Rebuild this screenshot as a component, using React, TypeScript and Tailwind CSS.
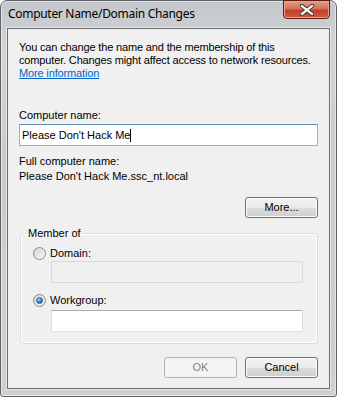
import React from "react";

const font = { fontFamily: '"Liberation Sans", Arial, sans-serif' };

function Radio({ checked }: { checked?: boolean }) {
  return (
    <svg width="13" height="13" viewBox="0 0 13 13" className="shrink-0">
      <defs>
        <linearGradient id="rbg" x1="0" y1="0" x2="1" y2="1">
          <stop offset="0" stopColor="#cfcfcf" />
          <stop offset="1" stopColor="#fafafa" />
        </linearGradient>
        <radialGradient id="rdot" cx="0.4" cy="0.35" r="0.7">
          <stop offset="0" stopColor="#a6d8ff" />
          <stop offset="0.5" stopColor="#3b8fd6" />
          <stop offset="1" stopColor="#1a4f86" />
        </radialGradient>
      </defs>
      <circle cx="6.5" cy="6.5" r="6" fill="url(#rbg)" stroke="#8a8a8a" strokeWidth="1" />
      <circle cx="6.5" cy="6.5" r="4.2" fill="none" stroke="#e8e8e8" strokeWidth="0.8" />
      {checked && <circle cx="6.5" cy="6.5" r="3" fill="url(#rdot)" stroke="#1d4f7c" strokeWidth="0.6" />}
    </svg>
  );
}

function Button({ children, disabled }: { children: React.ReactNode; disabled?: boolean }) {
  return (
    <div
      className={
        "w-[73px] h-[21px] rounded-[3px] border flex items-center justify-center text-[11px] leading-[13px] " +
        (disabled
          ? "border-[#adb2b5] bg-[#f4f4f4] text-[#838383]"
          : "border-[#707070] bg-[linear-gradient(#f2f2f2_0%,#ebebeb_50%,#dddddd_50%,#cfcfcf_100%)] text-black shadow-[inset_0_0_0_1px_#fcfcfc]")
      }
      style={font}
    >
      {children}
    </div>
  );
}

export default function App() {
  return (
    <div
      className="w-[337px] h-[397px] flex flex-col border border-[#5f6468] rounded-t-[7px] rounded-b-[3px] px-[6px] pb-[7px] bg-[linear-gradient(180deg,#c3c7cb_0%,#d2d4d6_12%,#c9cbcd_40%,#cfd0d1_100%)] shadow-[inset_0_0_0_1px_#e4e6e8]"
    >
      <div className="h-[27px] flex items-start justify-between">
        <div
          className="pt-[5px] pl-[1px] text-[12px] leading-[16px] tracking-[-0.3px] text-black"
          style={{ fontFamily: '"Noto Sans", "Open Sans", sans-serif' }}
        >
          Computer Name/Domain Changes
        </div>
        <div className="mt-[-1px] w-[47px] h-[19px] rounded-b-[4px] border border-[#5a1d12] bg-[linear-gradient(180deg,#e6a089_0%,#d2715a_45%,#c0402a_55%,#cf5a3e_100%)] shadow-[inset_0_0_0_1px_#eca28e] flex items-center justify-center">
          <svg width="14" height="12" viewBox="0 0 14 12">
            <path
              d="M1.5 1.5 L12.5 10.5 M12.5 1.5 L1.5 10.5"
              stroke="#3b3b3b"
              strokeWidth="4"
              strokeLinecap="round"
            />
            <path
              d="M2 2 L12 10 M12 2 L2 10"
              stroke="#ffffff"
              strokeWidth="2.2"
              strokeLinecap="square"
            />
          </svg>
        </div>
      </div>

      <div
        className="flex-1 border border-[#6a6d70] bg-[#f0f0f0] flex flex-col px-[11px] pt-[12px] text-[11px] leading-[13px] text-black shadow-[0_0_0_1px_#e6e8ea]"
        style={font}
      >
        <div className="whitespace-nowrap tracking-[-0.15px]">
          <div>You can change the name and the membership of this</div>
          <div>computer. Changes might affect access to network resources.</div>
          <div className="text-[#0066cc] underline">More information</div>
        </div>

        <div className="mt-[29px]">Computer name:</div>
        <div className="mt-[2px] h-[22px] border border-[#8fb2d0] border-t-[#5c8fb8] bg-white flex items-center pl-[2px]">
          <span>Please Don't Hack Me</span>
          <span className="inline-block w-px h-[13px] bg-black" />
        </div>

        <div className="mt-[9px]">Full computer name:</div>
        <div className="mt-[2px]">Please Don't Hack Me.ssc_nt.local</div>

        <div className="mt-[14px] flex justify-end">
          <Button>More...</Button>
        </div>

        <fieldset className="mt-[9px] ml-[1px] w-[298px] border border-[#d5dfe5] rounded-[3px] pb-[11px] shadow-[inset_0_0_0_1px_#ffffff]">
          <legend className="ml-[5px] px-[2px] leading-[13px]">Member of</legend>
          <div className="pl-[12px]">
            <div className="mt-[7px] flex items-center gap-[4px] h-[13px]">
              <Radio />
              <span>Domain:</span>
            </div>
            <div className="mt-[1px] ml-[18px] w-[252px] h-[22px] border border-[#d9d9d9] bg-[#f0f0f0]" />
            <div className="mt-[11px] flex items-center gap-[4px] h-[13px]">
              <Radio checked />
              <span>Workgroup:</span>
            </div>
            <div className="mt-[3px] ml-[18px] w-[252px] h-[22px] border border-[#dbdfe6] border-t-[#abadb3] bg-white" />
          </div>
        </fieldset>

        <div className="mt-[13px] flex justify-end gap-[8px]">
          <Button disabled>OK</Button>
          <Button>Cancel</Button>
        </div>
      </div>
    </div>
  );
}
